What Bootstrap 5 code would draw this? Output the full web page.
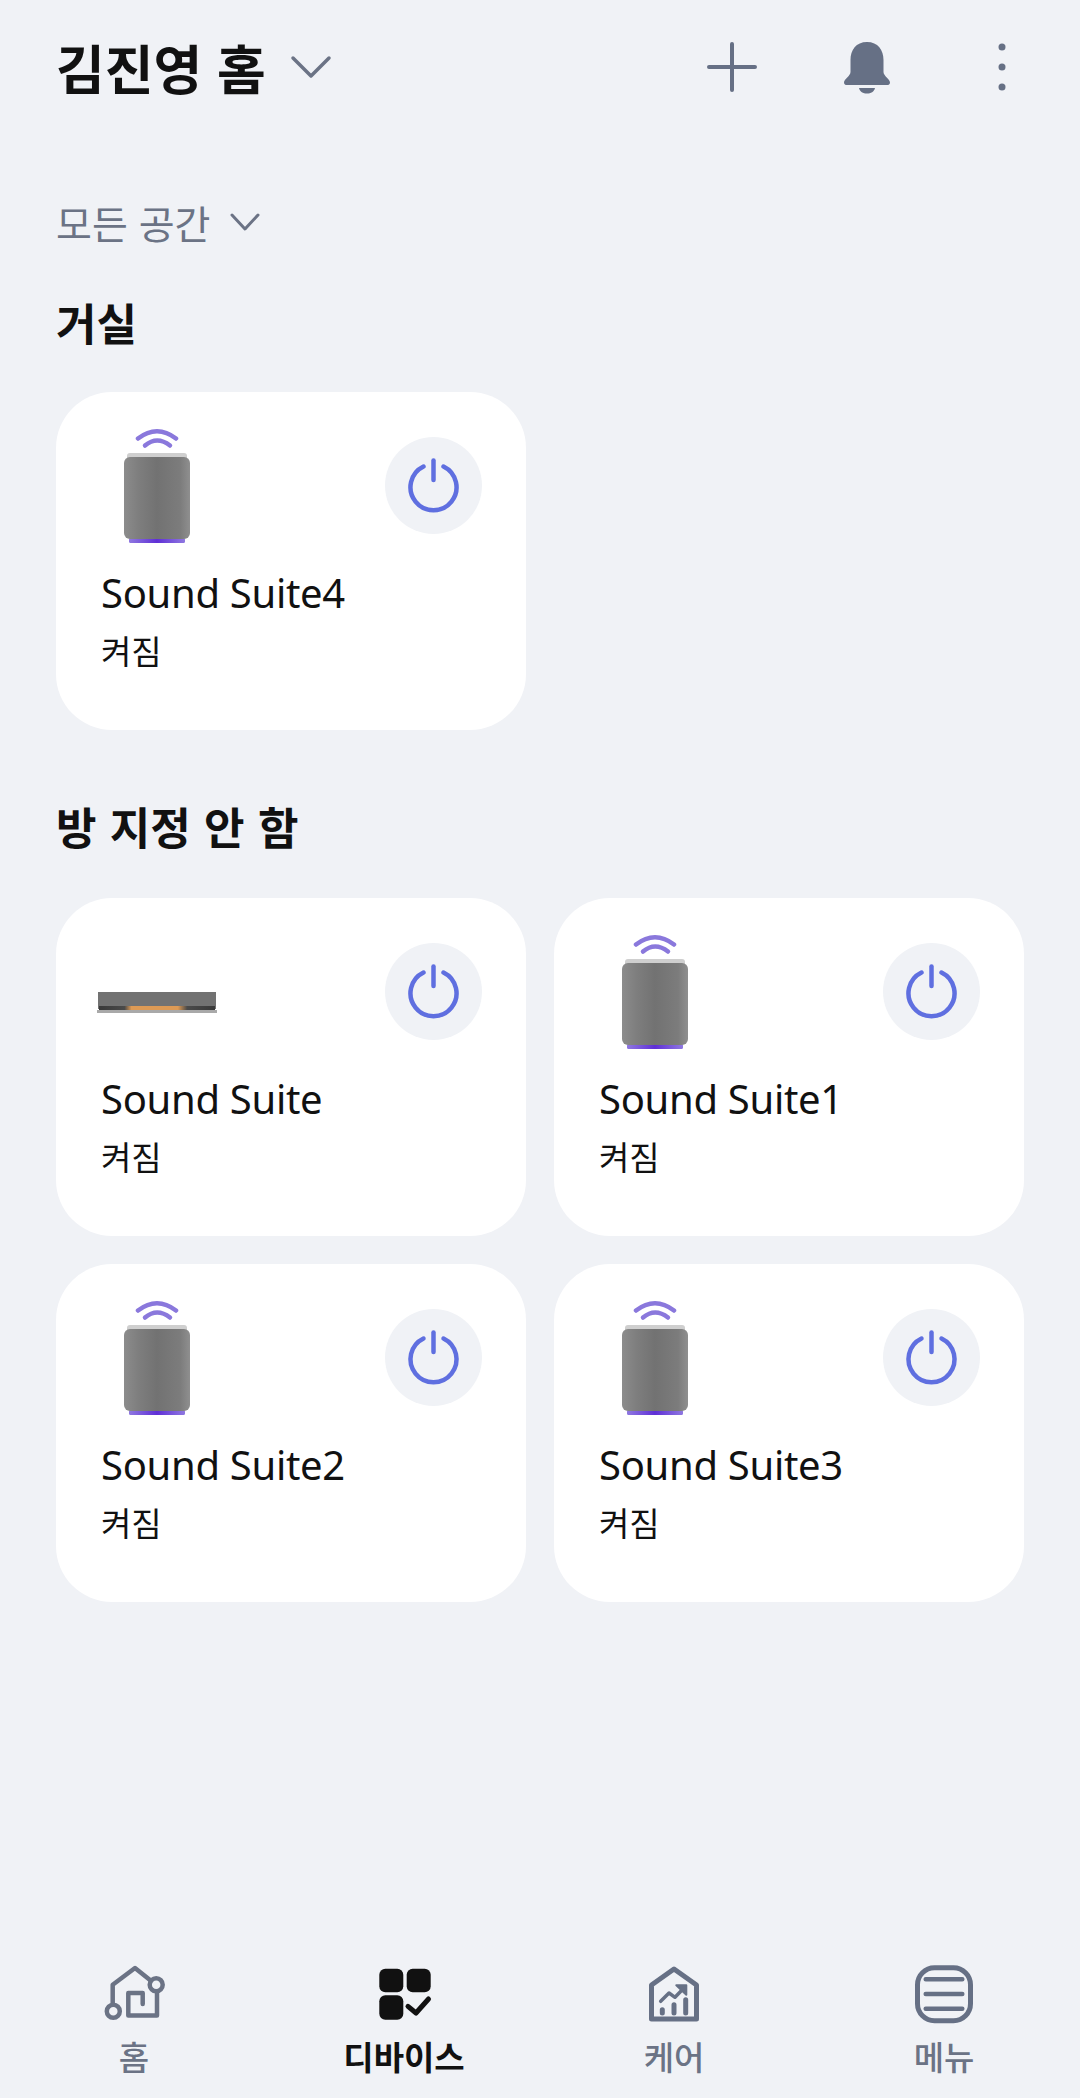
<!DOCTYPE html>
<html lang="ko">
<head>
    <meta charset="UTF-8">
    <meta name="viewport" content="width=device-width, initial-scale=1">
    <title>김진영 홈</title>
    <link href="https://cdn.jsdelivr.net/npm/bootstrap@5.3.3/dist/css/bootstrap.min.css" rel="stylesheet">
    <style>
        body {
            background: #f0f2f6;
            color: #111;
            font-family: "Noto Sans", "Noto Sans CJK KR", sans-serif;
        }
        .app-shell {
            min-height: 2098px;
        }
        .page-body {
            padding: 0 56px;
        }
        .top-bar {
            height: 134px;
        }
        .home-title {
            font-family: "Noto Sans CJK KR", sans-serif;
            font-size: 53px;
            font-weight: 700;
            line-height: 60px;
            margin: 0;
        }
        .top-actions {
            gap: 79px;
            margin-right: -6px;
        }
        .top-actions svg {
            display: block;
        }
        .room-filter {
            margin-top: 60px;
            height: 56px;
            color: #6b7385;
            font-family: "Noto Sans CJK KR", sans-serif;
            font-size: 39px;
            line-height: 56px;
        }
        .room-chevron {
            margin-left: 20px;
        }
        .room-heading {
            font-family: "Noto Sans CJK KR", sans-serif;
            font-size: 44px;
            font-weight: 700;
            line-height: 60px;
            word-spacing: 1px;
            margin: 42px 0 40px;
        }
        .room-heading-next {
            margin: 66px 0 42px;
        }
        .device-row {
            --bs-gutter-x: 28px;
            --bs-gutter-y: 28px;
        }
        .device-card {
            height: 338px;
            border: 0;
            border-radius: 56px;
            padding: 33px 44px 0 45px;
        }
        .device-pic {
            display: block;
            margin-left: -4px;
        }
        .power-btn {
            width: 97px;
            height: 97px;
            margin-top: 12px;
            background: #f0f2f6;
            border: 0;
            border-radius: 50%;
        }
        .power-btn svg {
            display: block;
        }
        .device-name {
            margin-top: 15px;
            font-size: 40px;
            line-height: 56px;
            font-weight: 400;
            letter-spacing: -0.3px;
        }
        .device-state {
            margin-top: 7px;
            font-family: "Noto Sans CJK KR", sans-serif;
            font-size: 33px;
            line-height: 44px;
            font-weight: 400;
        }
        .tab-bar {
            margin-top: auto;
            margin-left: -1px;
            padding-bottom: 24px;
        }
        .tab-item {
            width: 270px;
            color: #6b7385;
            font-family: "Noto Sans CJK KR", sans-serif;
            font-size: 33px;
            font-weight: 500;
            line-height: 36px;
        }
        .tab-item svg {
            display: block;
            margin-bottom: 14px;
        }
        .tab-active {
            color: #111;
            font-weight: 700;
        }
    </style>
</head>
<body>
    <svg width="0" height="0" class="position-absolute">
        <defs>
            <linearGradient id="speaker-body" x1="0" x2="1" y1="0" y2="0">
                <stop offset="0" stop-color="#8c8c8c"/>
                <stop offset="0.22" stop-color="#7e7e7e"/>
                <stop offset="0.5" stop-color="#727272"/>
                <stop offset="0.85" stop-color="#7c7c7c"/>
                <stop offset="1" stop-color="#8f8f8f"/>
            </linearGradient>
            <linearGradient id="speaker-glow" x1="0" x2="1" y1="0" y2="0">
                <stop offset="0" stop-color="#8f78e0"/>
                <stop offset="0.5" stop-color="#5f2fd6"/>
                <stop offset="1" stop-color="#8f78e0"/>
            </linearGradient>
            <linearGradient id="bar-glow" x1="0" x2="1" y1="0" y2="0">
                <stop offset="0.02" stop-color="#3a3a3a"/>
                <stop offset="0.22" stop-color="#4a4a4a"/>
                <stop offset="0.28" stop-color="#dd9a55"/>
                <stop offset="0.68" stop-color="#dd9a55"/>
                <stop offset="0.76" stop-color="#4a4a4a"/>
                <stop offset="0.98" stop-color="#3a3a3a"/>
            </linearGradient>
            <symbol id="speaker" viewBox="0 0 120 125">
                <path d="M41 13.500Q60 -1 79 13.500" fill="none" stroke="#8a78dc" stroke-width="4.500" stroke-linecap="round"/>
                <path d="M48 20.500Q60 10.500 73 20.500" fill="none" stroke="#8a78dc" stroke-width="4.500" stroke-linecap="round"/>
                <rect x="30" y="28" width="60" height="10" rx="3" fill="#cfcfcf"/>
                <rect x="32" y="113" width="56" height="5" rx="1.500" fill="url(#speaker-glow)"/>
                <rect x="27" y="32" width="66" height="82" rx="6" fill="url(#speaker-body)"/>
            </symbol>
            <symbol id="power" viewBox="0 0 97 97">
                <path d="M38.500 29.500A23 23 0 1 0 58.500 29.500" fill="none" stroke="#5f6fe0" stroke-width="4.500" stroke-linecap="round"/>
                <path d="M48.500 23.500V43" fill="none" stroke="#5f6fe0" stroke-width="4.500" stroke-linecap="round"/>
            </symbol>
        </defs>
    </svg>

    <div class="app-shell d-flex flex-column">
        <div class="page-body">
            <!-- header -->
            <div class="top-bar d-flex align-items-center justify-content-between">
                <div class="d-flex align-items-center">
                    <h1 class="home-title">김진영 홈</h1>
                    <svg class="ms-4" width="42" height="24" viewBox="0 0 42 24"><path d="M3 3L21 21L39 3" fill="none" stroke="#6b7385" stroke-width="3.500" stroke-linecap="round" stroke-linejoin="round"/></svg>
                </div>
                <div class="top-actions d-flex align-items-center">
                    <svg width="56" height="56" viewBox="0 0 56 56"><path d="M28 5V51M5 28H51" fill="none" stroke="#667085" stroke-width="4" stroke-linecap="round"/></svg>
                    <svg width="56" height="56" viewBox="0 0 56 56"><path d="M28 3C17 3 11.500 11 11.500 21V33C11.500 37 5 40 5 43.500C5 45.500 6.500 46 8 46H48C49.500 46 51 45.500 51 43.500C51 40 44.500 37 44.500 33V21C44.500 11 39 3 28 3ZM20 49H36C35 53 32 54.500 28 54.500C24 54.500 21 53 20 49Z" fill="#667085"/></svg>
                    <svg width="56" height="56" viewBox="0 0 56 56"><circle cx="28" cy="8" r="3.500" fill="#667085"/><circle cx="28" cy="28" r="3.500" fill="#667085"/><circle cx="28" cy="48" r="3.500" fill="#667085"/></svg>
                </div>
            </div>

            <div class="room-filter d-flex align-items-center">
                <span>모든 공간</span>
                <svg class="room-chevron" width="30" height="18" viewBox="0 0 30 18"><path d="M2 2L15 16L28 2" fill="none" stroke="#6b7385" stroke-width="3" stroke-linecap="round" stroke-linejoin="round"/></svg>
            </div>

            <h2 class="room-heading">거실</h2>
            <div class="row row-cols-2 device-row">
                <div class="col">
                    <div class="card device-card">
                        <div class="d-flex justify-content-between align-items-start">
                            <svg class="device-pic" width="120" height="125"><use href="#speaker"/></svg>
                            <button class="btn power-btn p-0" type="button"><svg width="97" height="97"><use href="#power"/></svg></button>
                        </div>
                        <div class="device-name">Sound Suite4</div>
                        <div class="device-state">켜짐</div>
                    </div>
                </div>
            </div>

            <h2 class="room-heading room-heading-next">방 지정 안 함</h2>
            <div class="row row-cols-2 device-row">
                <div class="col">
                    <div class="card device-card">
                        <div class="d-flex justify-content-between align-items-start">
                            <svg class="device-pic" width="120" height="125" viewBox="0 0 120 125">
                                <rect x="1" y="61" width="118" height="17" fill="#727272"/>
                                <rect x="2" y="75" width="116" height="4" fill="url(#bar-glow)"/>
                                <rect x="0" y="79" width="120" height="3" fill="#a9a9a9"/>
                            </svg>
                            <button class="btn power-btn p-0" type="button"><svg width="97" height="97"><use href="#power"/></svg></button>
                        </div>
                        <div class="device-name">Sound Suite</div>
                        <div class="device-state">켜짐</div>
                    </div>
                </div>
                <div class="col">
                    <div class="card device-card">
                        <div class="d-flex justify-content-between align-items-start">
                            <svg class="device-pic" width="120" height="125"><use href="#speaker"/></svg>
                            <button class="btn power-btn p-0" type="button"><svg width="97" height="97"><use href="#power"/></svg></button>
                        </div>
                        <div class="device-name">Sound Suite1</div>
                        <div class="device-state">켜짐</div>
                    </div>
                </div>
                <div class="col">
                    <div class="card device-card">
                        <div class="d-flex justify-content-between align-items-start">
                            <svg class="device-pic" width="120" height="125"><use href="#speaker"/></svg>
                            <button class="btn power-btn p-0" type="button"><svg width="97" height="97"><use href="#power"/></svg></button>
                        </div>
                        <div class="device-name">Sound Suite2</div>
                        <div class="device-state">켜짐</div>
                    </div>
                </div>
                <div class="col">
                    <div class="card device-card">
                        <div class="d-flex justify-content-between align-items-start">
                            <svg class="device-pic" width="120" height="125"><use href="#speaker"/></svg>
                            <button class="btn power-btn p-0" type="button"><svg width="97" height="97"><use href="#power"/></svg></button>
                        </div>
                        <div class="device-name">Sound Suite3</div>
                        <div class="device-state">켜짐</div>
                    </div>
                </div>
            </div>
        </div>

        <!-- bottom tabs -->
        <nav class="tab-bar d-flex">
            <div class="tab-item d-flex flex-column align-items-center">
                <svg width="64" height="64" viewBox="0 0 64 64" fill="none" stroke="#6b7385" stroke-width="4.500" stroke-linecap="round" stroke-linejoin="round">
                    <path d="M10.700 43V24.700L33 8L48 20"/>
                    <circle cx="11.300" cy="51.300" r="6.500"/>
                    <circle cx="54.200" cy="24.700" r="6.500"/>
                    <path d="M55 33V55.500H26.300V33H40.700V44"/>
                </svg>
                <span>홈</span>
            </div>
            <div class="tab-item tab-active d-flex flex-column align-items-center">
                <svg width="64" height="64" viewBox="0 0 64 64">
                    <rect x="7.300" y="8.700" width="24" height="23.500" rx="6" fill="#111"/>
                    <rect x="34.700" y="8.700" width="24" height="23.500" rx="6" fill="#111"/>
                    <rect x="7.300" y="35.300" width="24" height="24.400" rx="6" fill="#111"/>
                    <path d="M36 46.300L44 53L56.500 39" fill="none" stroke="#111" stroke-width="5" stroke-linecap="round" stroke-linejoin="round"/>
                </svg>
                <span>디바이스</span>
            </div>
            <div class="tab-item d-flex flex-column align-items-center">
                <svg width="64" height="64" viewBox="0 0 64 64" fill="none" stroke="#667085" stroke-linecap="round" stroke-linejoin="round">
                    <path d="M32 9L9.500 25V59H54.500V25Z" stroke-width="5"/>
                    <path d="M20.300 49.700V53M32 44.700V53M43.700 39.700V53" stroke-width="5"/>
                    <path d="M18.700 41.300L27 33L33 37.300L41 29" stroke-width="3.500"/>
                    <path d="M34.300 25.300H44.300V34.700Z" fill="#667085" stroke-width="2"/>
                </svg>
                <span>케어</span>
            </div>
            <div class="tab-item d-flex flex-column align-items-center">
                <svg width="64" height="64" viewBox="0 0 64 64" fill="none" stroke="#667085" stroke-linecap="round">
                    <rect x="5.500" y="7.800" width="53" height="53" rx="17" stroke-width="5"/>
                    <path d="M13.700 19.300H50.300M13.700 34H50.300M13.700 48.700H50.300" stroke-width="4.500"/>
                </svg>
                <span>메뉴</span>
            </div>
        </nav>
    </div>

    <script src="https://cdn.jsdelivr.net/npm/bootstrap@5.3.3/dist/js/bootstrap.bundle.min.js"></script>
</body>
</html>
